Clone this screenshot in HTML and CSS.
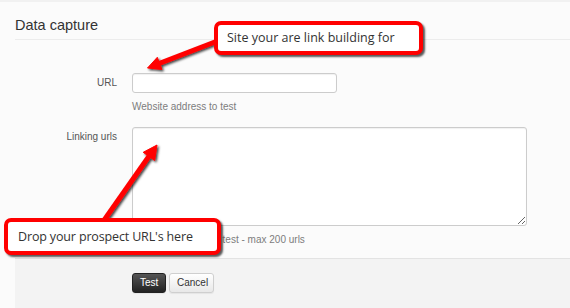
FILE: index.html
```html
<!DOCTYPE html>
<html lang="en">
<head>
<meta charset="utf-8">
<title>Data capture</title>
<link rel="stylesheet" href="styles.css">
</head>
<body>
<div class="page">
  <form class="form">
    <h1 class="legend">Data capture</h1>
    <div class="group">
      <label class="label" for="url">URL</label>
      <div class="controls">
        <input class="input" id="url" type="text">
        <p class="help">Website address to test</p>
      </div>
    </div>
    <div class="group group-links">
      <label class="label" for="links">Linking urls</label>
      <div class="controls">
        <textarea class="textarea" id="links"></textarea>
        <p class="help">List of linking urls to test - max 200 urls</p>
      </div>
    </div>
    <div class="actions">
      <button type="button" class="btn btn-dark">Test</button>
      <button type="button" class="btn">Cancel</button>
    </div>
  </form>

  <svg class="arrows" width="570" height="308" viewBox="0 0 570 308">
    <defs>
      <filter id="shadow" x="-20%" y="-20%" width="140%" height="140%">
        <feDropShadow dx="1.5" dy="1.5" stdDeviation="1" flood-color="#000" flood-opacity="0.75"/>
      </filter>
    </defs>
    <g filter="url(#shadow)" fill="#f00" stroke="#f00">
      <line x1="220" y1="40" x2="159" y2="63.5" stroke-width="5"/>
      <polygon points="147.5,68 161.9,69.4 157.3,57.3" stroke-width="1" stroke-linejoin="round"/>
      <line x1="100" y1="226" x2="149.5" y2="155.5" stroke-width="5"/>
      <polygon points="157,145 154.6,160.5 143.2,152.3" stroke-width="1" stroke-linejoin="round"/>
    </g>
  </svg>

  <div class="callout callout-site">Site your are link building for</div>
  <div class="callout callout-drop">Drop your prospect URL's here</div>
</div>
</body>
</html>
```

FILE: styles.css
```css
* { box-sizing: border-box; }

html, body {
  margin: 0;
  padding: 0;
}

body {
  width: 570px;
  height: 308px;
  overflow: hidden;
  background: #fbfbfb;
  font-family: "Liberation Sans", Arial, sans-serif;
  color: #333;
}

.page {
  position: relative;
  width: 570px;
  height: 308px;
  border-top: 2px solid #f1f1f1;
}

.form {
  margin: 0 0 0 15px;
  padding-top: 13px;
}

.legend {
  margin: 0 0 33px 0;
  padding: 0 0 4px 0;
  font-size: 14.5px;
  line-height: 20px;
  font-weight: normal;
  color: #333;
  border-bottom: 1px solid #ececec;
}

.group {
  display: grid;
  grid-template-columns: 102px 1fr;
  column-gap: 15px;
}

.group-links {
  margin-top: 14px;
}

.label {
  padding-top: 3px;
  text-align: right;
  font-size: 10px;
  line-height: 13px;
  color: #555;
}

.controls {
  display: flex;
  flex-direction: column;
  align-items: flex-start;
}

.input {
  width: 205px;
  height: 20px;
  margin: 0;
  padding: 2px 4px;
  border: 1px solid #ccc;
  border-radius: 3px;
  background: #fff;
  box-shadow: inset 0 1px 1px rgba(0, 0, 0, 0.06);
  font: 10px "Liberation Sans", Arial, sans-serif;
}

.textarea {
  width: 395px;
  height: 99px;
  margin: 0;
  padding: 3px 4px;
  border: 1px solid #ccc;
  border-radius: 3px;
  background: #fff;
  box-shadow: inset 0 1px 1px rgba(0, 0, 0, 0.06);
  font: 10px "Liberation Sans", Arial, sans-serif;
  display: block;
}

.help {
  margin: 7px 0 0 0;
  font-size: 10px;
  line-height: 13px;
  color: #7d7d7d;
}

.actions {
  margin-top: 12px;
  height: 60px;
  padding: 14px 0 0 117px;
  background: #f3f3f3;
  border-top: 1px solid #e3e3e3;
  display: flex;
  align-items: flex-start;
  gap: 3px;
}

.btn {
  height: 20px;
  padding: 0 7px;
  border: 1px solid #cfcfcf;
  border-radius: 3px;
  background: linear-gradient(#ffffff, #e8e8e8);
  box-shadow: 0 1px 1px rgba(0, 0, 0, 0.06);
  font: 10px/18px "Liberation Sans", Arial, sans-serif;
  color: #333;
  width: 45px;
}

.btn-dark {
  width: 34px;
  border-color: #222;
  background: linear-gradient(#555555, #222222);
  color: #fff;
}

.arrows {
  position: absolute;
  left: 0;
  top: -2px;
}

.callout {
  position: absolute;
  border: 4px solid #f00;
  border-radius: 7px;
  background: #fff;
  box-shadow: 2px 2px 2px rgba(0, 0, 0, 0.65);
  font-family: "Open Sans", "Noto Sans", sans-serif;
  font-size: 12.5px;
  color: #333;
  white-space: nowrap;
}

.callout-site {
  left: 214px;
  top: 19px;
  width: 209px;
  height: 34px;
  padding-left: 9px;
  line-height: 26px;
}

.callout-drop {
  left: 4px;
  top: 216px;
  width: 217px;
  height: 37px;
  padding-left: 10px;
  line-height: 29px;
  letter-spacing: -0.15px;
}
```
